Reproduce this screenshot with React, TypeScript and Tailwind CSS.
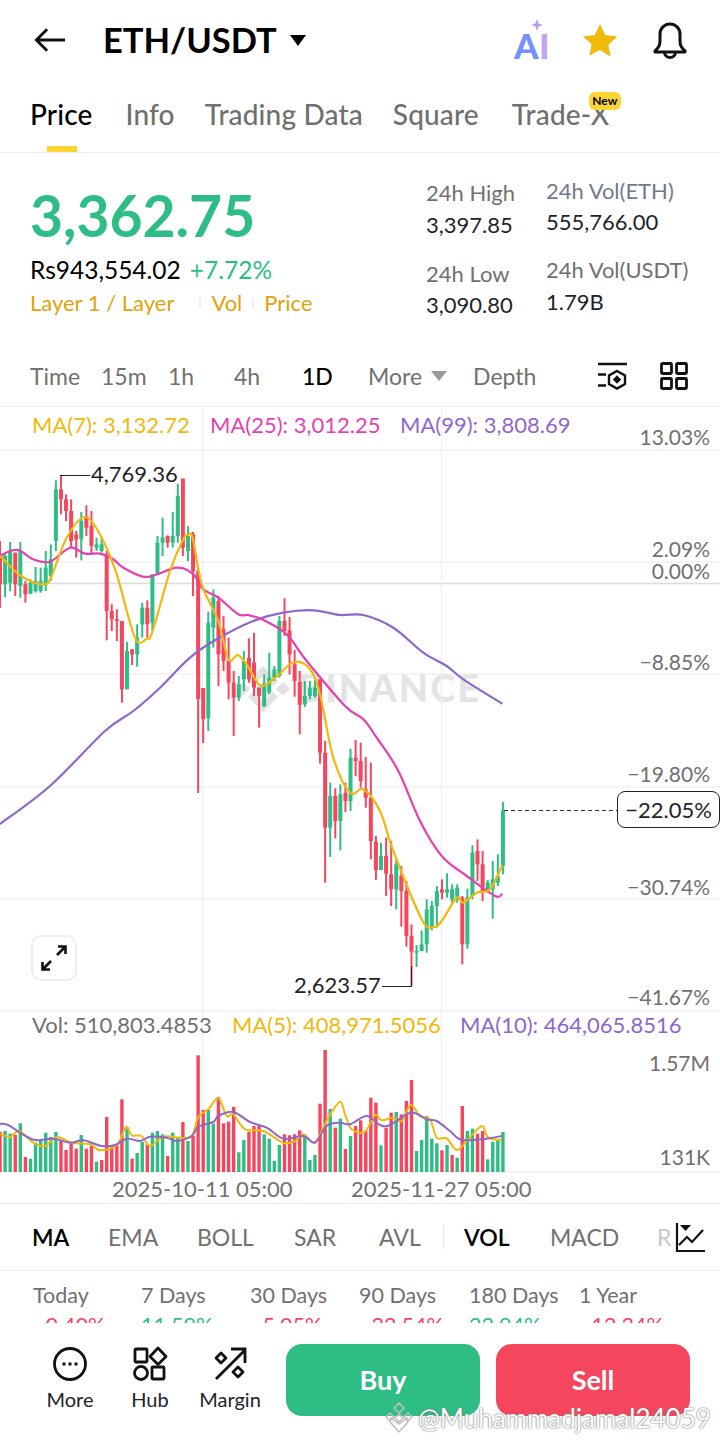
const RED = '#f6465d';
const GREEN = '#2ebd85';

type Candle = [number, number, number, number, 'r' | 'g'];

// high, low, body top, body bottom (left part measured on a 3x grid from y=440)
const CANDLES_LEFT: Candle[] = [
  [300, 500, 340, 430, 'r'], [340, 468, 345, 430, 'g'], [303, 450, 330, 425, 'g'], [335, 465, 335, 430, 'r'],
  [303, 470, 330, 435, 'g'], [420, 485, 430, 460, 'r'], [415, 458, 425, 458, 'g'], [378, 455, 420, 450, 'g'],
  [380, 455, 420, 450, 'g'], [330, 450, 380, 430, 'g'], [310, 420, 355, 405, 'g'], [118, 330, 145, 300, 'g'],
  [103, 220, 145, 175, 'r'], [160, 240, 175, 210, 'r'], [175, 320, 210, 300, 'r'], [270, 350, 280, 295, 'r'],
  [213, 358, 240, 295, 'g'], [193, 285, 225, 260, 'r'], [210, 340, 255, 315, 'r'], [290, 330, 310, 320, 'g'],
  [290, 335, 310, 330, 'g'], [330, 598, 340, 510, 'r'], [490, 570, 510, 535, 'r'], [505, 600, 535, 540, 'r'],
  [540, 785, 540, 745, 'r'], [603, 745, 630, 745, 'g'], [625, 672, 625, 640, 'r'], [550, 677, 590, 640, 'g'],
  [485, 590, 500, 550, 'g'], [478, 590, 500, 550, 'r'], [400, 570, 400, 545, 'g'], [285, 400, 305, 400, 'g'],
  [230, 345, 290, 305, 'g'], [283, 320, 285, 305, 'r'], [213, 320, 285, 305, 'g'], [128, 305, 165, 285, 'g'],
  [113, 345, 113, 320, 'r'], [255, 360, 285, 330, 'g'], [273, 465, 280, 390, 'r'], [375, 1056, 390, 774, 'r'],
  [741, 906, 741, 834, 'r'], [512, 870, 545, 831, 'g'], [445, 620, 470, 560, 'g'], [465, 735, 480, 640, 'r'],
  [525, 690, 565, 660, 'r'], [590, 775, 660, 725, 'r'], [690, 885, 725, 770, 'r'], [705, 780, 730, 770, 'g'],
  [630, 750, 660, 715, 'g'], [592, 725, 650, 715, 'r'],
];

// same, right part on a 3x grid from y=580
const CANDLES_RIGHT: Candle[] = [
  [155, 345, 245, 320, 'r'], [320, 440, 320, 345, 'r'], [280, 378, 310, 375, 'g'], [215, 340, 290, 335, 'g'],
  [255, 300, 265, 290, 'g'], [105, 290, 120, 285, 'g'], [52, 165, 120, 150, 'r'], [108, 280, 148, 220, 'r'],
  [207, 347, 250, 300, 'r'], [270, 460, 303, 372, 'r'], [300, 378, 345, 370, 'g'], [300, 355, 322, 345, 'g'],
  [298, 350, 320, 345, 'g'], [295, 548, 295, 515, 'r'], [480, 905, 515, 740, 'r'], [605, 828, 645, 740, 'g'],
  [622, 772, 645, 720, 'r'], [610, 808, 640, 720, 'g'], [605, 693, 635, 660, 'r'], [503, 690, 530, 660, 'g'],
  [477, 585, 530, 540, 'r'], [485, 620, 540, 600, 'r'], [528, 680, 625, 650, 'r'], [545, 835, 650, 780, 'r'],
  [765, 897, 782, 867, 'r'], [785, 867, 825, 867, 'g'], [770, 945, 825, 878, 'r'], [780, 975, 880, 925, 'r'],
  [835, 985, 850, 925, 'g'], [855, 1037, 885, 930, 'r'], [900, 1097, 930, 1065, 'r'], [1030, 1215, 1065, 1112, 'r'],
  [1092, 1158, 1110, 1115, 'g'], [1048, 1110, 1090, 1110, 'g'], [955, 1115, 985, 1090, 'g'], [960, 1048, 975, 1040, 'g'],
  [915, 1040, 930, 975, 'g'], [895, 955, 925, 935, 'r'], [877, 950, 925, 935, 'g'], [910, 970, 925, 955, 'g'],
  [910, 965, 920, 955, 'g'], [945, 1150, 950, 1090, 'r'], [923, 1103, 950, 1090, 'g'], [793, 955, 815, 945, 'g'],
  [775, 900, 810, 850, 'r'], [810, 960, 850, 930, 'r'], [897, 935, 905, 930, 'g'], [840, 1013, 895, 925, 'g'],
  [820, 915, 885, 905, 'g'], [663, 880, 688, 855, 'g'],
];

const VOLUMES: [number, 'r' | 'g'][] = [
  [362, 'r'], [360, 'g'], [368, 'g'], [372, 'r'], [337, 'g'], [438, 'r'], [443, 'g'], [395, 'g'], [390, 'g'], [365, 'g'],
  [378, 'g'], [363, 'g'], [390, 'r'], [417, 'r'], [397, 'r'], [413, 'r'], [372, 'g'], [413, 'r'], [405, 'r'], [452, 'g'],
  [447, 'r'], [318, 'r'], [405, 'r'], [400, 'r'], [265, 'r'], [352, 'g'], [443, 'r'], [426, 'g'], [393, 'g'], [400, 'r'],
  [365, 'g'], [360, 'g'], [370, 'g'], [435, 'r'], [365, 'g'], [378, 'g'], [333, 'r'], [390, 'g'], [375, 'r'], [133, 'r'],
  [297, 'r'], [297, 'g'], [338, 'g'], [258, 'r'], [337, 'r'], [332, 'r'], [288, 'r'], [424, 'g'], [387, 'g'], [363, 'r'],
  [345, 'r'], [345, 'r'], [370, 'g'], [383, 'g'], [450, 'g'], [402, 'g'], [370, 'r'], [373, 'r'], [370, 'r'], [358, 'r'],
  [375, 'g'], [447, 'g'], [432, 'g'], [278, 'r'], [117, 'r'], [294, 'g'], [350, 'r'], [323, 'g'], [414, 'r'], [375, 'g'],
  [345, 'r'], [328, 'r'], [360, 'r'], [260, 'r'], [275, 'r'], [403, 'g'], [350, 'r'], [305, 'r'], [303, 'g'], [310, 'r'],
  [270, 'r'], [207, 'r'], [420, 'g'], [387, 'g'], [315, 'g'], [383, 'g'], [397, 'g'], [418, 'r'], [402, 'g'], [432, 'r'],
  [440, 'g'], [285, 'r'], [360, 'g'], [353, 'g'], [368, 'r'], [360, 'r'], [445, 'g'], [392, 'g'], [388, 'g'], [363, 'g'],
];

const STEP = 5.08;

type Pt = [number, number];

function pts(list: Pt[], x0: number, y0: number): Pt[] {
  return list.map(([x, y]) => [x0 + x / 3, y0 + y / 3]);
}

// catmull-rom through the points, the real lines are smooth
function smooth(p: Pt[]) {
  let d = `M${p[0][0].toFixed(1)} ${p[0][1].toFixed(1)}`;
  for (let i = 0; i < p.length - 1; i++) {
    const a = p[Math.max(i - 1, 0)];
    const b = p[i];
    const c = p[i + 1];
    const e = p[Math.min(i + 2, p.length - 1)];
    const c1x = b[0] + (c[0] - a[0]) / 6;
    const c1y = b[1] + (c[1] - a[1]) / 6;
    const c2x = c[0] - (e[0] - b[0]) / 6;
    const c2y = c[1] - (e[1] - b[1]) / 6;
    d += `C${c1x.toFixed(1)} ${c1y.toFixed(1)} ${c2x.toFixed(1)} ${c2y.toFixed(1)} ${c[0].toFixed(1)} ${c[1].toFixed(1)}`;
  }
  return d;
}

const MA7 = smooth([
  ...pts([[-20, 330], [0, 345], [50, 395], [90, 420], [135, 430], [155, 405], [200, 290], [255, 228], [305, 290], [350, 400], [405, 590], [440, 593], [458, 570], [510, 390], [550, 295], [565, 282], [578, 290], [605, 430], [655, 540], [685, 655], [713, 642], [740, 670], [780, 733], [820, 715], [882, 663]], 0, 440),
  ...pts([[180, 265], [210, 340], [250, 530], [300, 635], [340, 625], [390, 690], [430, 810], [515, 1015], [550, 1038], [575, 1020], [620, 950], [640, 965], [680, 935], [720, 925], [757, 853]], 250, 580),
]);

const MA25 = smooth([
  ...pts([[0, 345], [30, 330], [58, 328], [100, 355], [150, 362], [210, 320], [255, 338], [300, 338], [340, 355], [370, 380], [440, 408], [530, 380], [580, 400], [610, 445], [655, 470], [715, 520], [745, 522], [790, 537], [860, 580], [920, 660]], 0, 440),
  ...pts([[285, 375], [340, 415], [380, 470], [445, 570], [510, 720], [575, 825], [650, 885], [735, 945], [757, 938]], 250, 580),
]);

const MA99 = smooth([
  [0, 823],
  [50, 785],
  ...pts([[315, 870], [400, 810], [480, 740], [570, 650], [650, 595], [760, 540]], 0, 440),
  ...pts([[100, 95], [190, 88], [270, 102], [340, 102], [430, 140], [520, 215], [590, 255], [640, 295], [757, 368]], 250, 580),
]);

const VOL_MA5 = smooth([
  ...pts([[0, 368], [30, 378], [58, 360], [100, 395], [135, 405], [170, 378], [215, 395], [270, 400], [300, 418], [350, 403], [378, 348], [395, 373], [425, 375], [450, 405], [490, 377], [540, 380], [575, 375], [595, 318], [625, 295], [655, 262], [680, 315], [700, 310], [735, 355], [790, 360], [850, 395], [885, 390], [910, 370], [945, 393], [985, 320]], 0, 1010),
  ...pts([[0, 272], [15, 310], [35, 355], [75, 362], [105, 312], [125, 328], [160, 320], [185, 330], [212, 282], [240, 315], [270, 325], [290, 380], [320, 382], [350, 417], [380, 390], [425, 345], [445, 380], [485, 387]], 340, 1010),
]);

const VOL_MA10 = smooth([
  ...pts([[0, 338], [25, 342], [60, 365], [105, 387], [160, 383], [210, 395], [250, 388], [305, 405], [345, 402], [380, 383], [420, 390], [450, 377], [500, 380], [530, 390], [575, 375], [595, 347], [640, 333], [655, 315], [700, 303], [750, 333], [800, 350], [850, 383], [910, 375], [945, 395], [980, 345]], 0, 1010),
  ...pts([[0, 335], [30, 340], [80, 315], [120, 342], [150, 342], [212, 305], [260, 325], [290, 330], [330, 360], [365, 387], [440, 383], [485, 375]], 340, 1010),
]);

function CandleMark({ c, i, y0 }: { c: Candle; i: number; y0: number }) {
  const x = i * STEP;
  const color = c[4] === 'r' ? RED : GREEN;
  const top = y0 + c[2] / 3;
  const bottom = y0 + c[3] / 3;
  return (
    <g>
      <line x1={x} x2={x} y1={y0 + c[0] / 3} y2={y0 + c[1] / 3} stroke={color} strokeWidth={2} />
      <rect x={x - 2} y={top} width={4} height={Math.max(bottom - top, 1)} fill={color} />
    </g>
  );
}

function ChartDrawing() {
  return (
    <svg className="absolute inset-0" width={720} height={797} viewBox="0 406 720 797" fill="none">
      {[449, 561, 673, 786, 898, 1010, 1171].map(y => (
        <line key={y} x1={0} x2={720} y1={y} y2={y} stroke="#f1f1f1" strokeWidth={1.5} />
      ))}
      <line x1={0} x2={720} y1={582.5} y2={582.5} stroke="#dcdcdc" strokeWidth={1.5} />
      <line x1={202.5} x2={202.5} y1={407} y2={1171} stroke="#eeeeee" />
      <line x1={441.5} x2={441.5} y1={407} y2={1171} stroke="#eeeeee" />

      {/* watermark logo */}
      <g fill="#e2e2e2">
        <path d="M263 665l15 15-5 5-10-10-10 10-5-5zM263 711l15-15-5-5-10 10-10-10-5 5z" />
        <rect x={258} y={683} width={10} height={10} transform="rotate(45 263 688)" />
        <rect x={238} y={683} width={10} height={10} transform="rotate(45 243 688)" />
        <rect x={278} y={683} width={10} height={10} transform="rotate(45 283 688)" />
      </g>

      {CANDLES_LEFT.map((c, i) => (
        <CandleMark key={i} c={c} i={i} y0={440} />
      ))}
      {CANDLES_RIGHT.map((c, i) => (
        <CandleMark key={i} c={c} i={i + 50} y0={580} />
      ))}

      <path d={MA99} stroke="#8e67cb" strokeWidth={2.2} />
      <path d={MA25} stroke="#e83fb0" strokeWidth={2.2} />
      <path d={MA7} stroke="#f0b90b" strokeWidth={2.2} />

      <path d="M60 474.5H90M382 985.5H411.500V965" stroke="#1e2329" strokeWidth={1} />
      <path d="M504 809.500H617" stroke="#333" strokeWidth={1} strokeDasharray="4 3" />

      {VOLUMES.map(([top, s], i) => (
        <rect
          key={i}
          x={i * STEP - 1.7}
          y={1010 + top / 3}
          width={3.4}
          height={161 - top / 3}
          fill={s === 'r' ? RED : GREEN}
        />
      ))}
      <path d={VOL_MA5} stroke="#f0b90b" strokeWidth={2} />
      <path d={VOL_MA10} stroke="#8e67cb" strokeWidth={2} />
    </svg>
  );
}

const AXIS = [
  { label: '13.03%', cls: 'top-[16px]' },
  { label: '2.09%', cls: 'top-[128px]' },
  { label: '0.00%', cls: 'top-[150px]' },
  { label: '−8.85%', cls: 'top-[241px]' },
  { label: '−19.80%', cls: 'top-[353px]' },
  { label: '−30.74%', cls: 'top-[466px]' },
  { label: '−41.67%', cls: 'top-[576px]' },
  { label: '1.57M', cls: 'top-[642px]' },
  { label: '131K', cls: 'top-[736px]' },
];

function Chart() {
  return (
    <div className="relative h-[797px] border-b border-[#eeeeee] overflow-hidden">
      <div className="absolute left-[298px] top-[253px] text-[38px] leading-[54px] font-black tracking-[2px] text-[#e4e4e4]">
        BINANCE
      </div>
      <ChartDrawing />

      <div className="absolute left-[32px] top-[4px] text-[22px] leading-[28px] text-[#f0b90b]">MA(7): 3,132.72</div>
      <div className="absolute left-[210px] top-[4px] text-[22px] leading-[28px] text-[#e83fb0]">MA(25): 3,012.25</div>
      <div className="absolute left-[400px] top-[4px] text-[22px] leading-[28px] text-[#8e67cb]">MA(99): 3,808.69</div>

      {AXIS.map(a => (
        <div key={a.label} className={`absolute right-[10px] text-[21px] leading-[28px] text-[#707070] ${a.cls}`}>
          {a.label}
        </div>
      ))}

      <div className="absolute left-[91px] top-[53px] text-[22px] leading-[28px] text-[#1e2329]">4,769.36</div>
      <div className="absolute left-[294px] top-[564px] text-[22px] leading-[28px] text-[#1e2329]">2,623.57</div>

      <div className="absolute left-[617px] top-[384px] w-[103px] h-[37px] flex items-center justify-center rounded-lg border border-[#1e2329] bg-white text-[22px] text-[#1e2329]">
        −22.05%
      </div>

      <div className="absolute left-[31px] top-[528px] w-[46px] h-[46px] flex items-center justify-center rounded-[10px] border-2 border-[#eeeeee] bg-white">
        <svg width="30" height="30" viewBox="0 0 30 30" fill="none" stroke="#111" strokeWidth="2.600">
          <path d="M18 12l8-8M19 3.500h7.500V11M12 18l-8 8M3.500 19v7.500H11" />
        </svg>
      </div>

      <div className="absolute left-[32px] top-[604px] text-[22px] leading-[28px] text-[#707070]">Vol: 510,803.4853</div>
      <div className="absolute left-[232px] top-[604px] text-[22px] leading-[28px] text-[#f0b90b]">MA(5): 408,971.5056</div>
      <div className="absolute left-[460px] top-[604px] text-[22px] leading-[28px] text-[#8e67cb]">MA(10): 464,065.8516</div>

      <div className="absolute left-[112px] top-[768px] text-[22px] leading-[28px] text-[#707070]">2025-10-11 05:00</div>
      <div className="absolute left-[351px] top-[768px] text-[22px] leading-[28px] text-[#707070]">2025-11-27 05:00</div>
    </div>
  );
}

function Header() {
  return (
    <div className="h-[80px] flex items-center pl-[34px] pr-[33px]">
      <svg width="32" height="26" viewBox="0 0 33 26" fill="none" stroke="#111" strokeWidth="3">
        <path d="M32 13H3M13.500 2L2.500 13l11 11" />
      </svg>
      <span className="ml-[37px] text-[34.500px] leading-[40px] font-bold text-black">ETH/USDT</span>
      <span className="ml-[13px] w-0 h-0 border-x-[8px] border-x-transparent border-t-[11px] border-t-black" />
      <div className="ml-auto flex items-center">
        <div className="relative w-[40px] h-[44px] mt-[2px]">
          <svg className="absolute left-[20px] top-0" width="14" height="14" viewBox="0 0 14 14">
            <path d="M6 0l1.600 4.400L12 6 7.600 7.600 6 12 4.400 7.600 0 6l4.400-1.600z" fill="#b79bf0" />
          </svg>
          <span className="absolute left-[3px] top-[6px] text-[35px] leading-[40px] font-black text-[#7590ff]">A</span>
          <span className="absolute left-[28px] top-[6px] text-[35px] leading-[40px] font-black text-[#c0a6f2]">I</span>
        </div>
        <svg className="ml-[31px]" width="36" height="34" viewBox="0 0 36 34">
          <path d="M18 1l5.200 11 12 1.600-8.800 8.300 2.300 11.900L18 27l-10.700 5.800 2.300-11.900L.8 13.600l12-1.600z" fill="#f0b90b" />
        </svg>
        <svg className="ml-[35px]" width="34" height="38" viewBox="0 0 34 38" fill="none" stroke="#111" strokeWidth="3">
          <path d="M2 30c3-3 5-5 5-10v-7a10 10 0 0 1 20 0v7c0 5 2 7 5 10a1 1 0 0 1 0 1H2z" strokeLinejoin="round" />
          <path d="M11.500 31a5.500 5.500 0 0 0 11 0" />
        </svg>
      </div>
    </div>
  );
}

function Tabs() {
  return (
    <div className="relative h-[73px] flex items-start gap-[30px] pl-[30px] pt-[17px] border-b border-[#eeeeee] text-[28px] leading-[34px] tracking-[0.15px] font-medium text-[#707070]">
      <span className="mr-[3px] text-black">Price</span>
      <span>Info</span>
      <span>Trading Data</span>
      <span className="mr-[3px]">Square</span>
      <span className="relative">
        Trade-X
        <span className="absolute left-[77px] -top-[5px] w-[32px] h-[18px] rounded-[6px] bg-[#fcd535] flex items-center justify-center text-[12px] leading-none font-bold tracking-normal text-black">
          New
        </span>
      </span>
      <span className="absolute left-[47px] bottom-0 w-[30px] h-[6px] bg-[#fcd535]" />
    </div>
  );
}

function Stats() {
  return (
    <div className="h-[197px] flex pl-[30px]">
      <div className="w-[396px] pt-[28px]">
        <div className="text-[57px] leading-[68px] font-bold text-[#2ebd85]">3,362.75</div>
        <div className="mt-[6px] flex items-center gap-[9px] text-[24.500px] leading-[30px]">
          <span className="text-black">Rs943,554.02</span>
          <span className="text-[#2ebd85]">+7.72%</span>
        </div>
        <div className="mt-[4px] flex items-center text-[22px] leading-[28px] text-[#e0a30b]">
          <span>Layer 1 / Layer</span>
          <span className="ml-[25px] w-[2px] h-[10px] bg-[#eeeeee]" />
          <span className="ml-[10px]">Vol</span>
          <span className="ml-[10px] w-[2px] h-[10px] bg-[#eeeeee]" />
          <span className="ml-[10px]">Price</span>
        </div>
      </div>
      <div className="w-[120px] pt-[26px] text-[22px] leading-[28px]">
        <div className="text-[#707070]">24h High</div>
        <div className="mt-[4px] text-[#1e2329]">3,397.85</div>
        <div className="mt-[21px] text-[#707070]">24h Low</div>
        <div className="mt-[3px] text-[#1e2329]">3,090.80</div>
      </div>
      <div className="pt-[24px] text-[22px] leading-[28px]">
        <div className="text-[#707a8a]">24h Vol(ETH)</div>
        <div className="mt-[3px] text-[#1e2329]">555,766.00</div>
        <div className="mt-[20px] text-[#707070]">24h Vol(USDT)</div>
        <div className="mt-[4px] text-[#1e2329]">1.79B</div>
      </div>
    </div>
  );
}

function TimeRow() {
  return (
    <div className="h-[56px] flex items-center pl-[30px] pb-[4px] text-[23px] leading-[30px] text-[#707070]">
      <span className="w-[71px]">Time</span>
      <span className="w-[67px]">15m</span>
      <span className="w-[66px]">1h</span>
      <span className="w-[68px]">4h</span>
      <span className="w-[66px] font-medium text-black">1D</span>
      <span>More</span>
      <span className="ml-[9px] w-0 h-0 border-x-[8px] border-x-transparent border-t-[10px] border-t-[#9a9a9a]" />
      <span className="ml-[26px]">Depth</span>
      <svg className="ml-[61px]" width="30" height="28" viewBox="0 0 30 28" fill="none" stroke="#111" strokeWidth="2.400">
        <path d="M1 2h29M1 12.500h8M1 23.500h8" />
        <path d="M20 9l8 4.500v8.500l-8 4.500-8-4.500v-8.500z" />
        <path d="M20 15l2.500 2.500L20 20l-2.500-2.500z" fill="#111" />
      </svg>
      <svg className="ml-[33px]" width="28" height="28" viewBox="0 0 28 28" fill="none" stroke="#111" strokeWidth="2.800">
        <rect x="1.500" y="1.500" width="10" height="10" rx="1" />
        <rect x="16.500" y="1.500" width="10" height="10" rx="1" />
        <rect x="1.500" y="16.500" width="10" height="10" rx="1" />
        <rect x="16.500" y="16.500" width="10" height="10" rx="1" />
      </svg>
    </div>
  );
}

function Indicators() {
  return (
    <div className="relative h-[67px] flex items-center pl-[32px] border-b border-[#eeeeee] text-[23px] leading-[30px] text-[#707070] overflow-hidden">
      <span className="w-[76px] font-semibold text-black">MA</span>
      <span className="w-[89px]">EMA</span>
      <span className="w-[97px]">BOLL</span>
      <span className="w-[85px]">SAR</span>
      <span className="w-[64px]">AVL</span>
      <span className="w-px h-[24px] bg-[#e6e6e6]" />
      <span className="ml-[20px] w-[86px] font-semibold text-black">VOL</span>
      <span className="w-[107px]">MACD</span>
      <span className="text-[#c8c8c8]">R</span>
      <svg className="absolute left-[675px] top-[19px]" width="30" height="30" viewBox="0 0 30 30" fill="none" stroke="#111" strokeWidth="2.200">
        <path d="M2 0v28h28" />
        <path d="M4 22l8-8 5 5 11-12" />
        <path d="M5 2h11l-5.500 6z" fill="#111" stroke="none" />
      </svg>
    </div>
  );
}

const RETURNS = [
  { label: 'Today', value: '−0.40%', cls: 'text-[#f6465d]' },
  { label: '7 Days', value: '11.59%', cls: 'text-[#2ebd85]' },
  { label: '30 Days', value: '−5.05%', cls: 'text-[#f6465d]' },
  { label: '90 Days', value: '−22.54%', cls: 'text-[#f6465d]' },
  { label: '180 Days', value: '22.94%', cls: 'text-[#2ebd85]' },
  { label: '1 Year', value: '−12.34%', cls: 'text-[#f6465d]' },
];

function Returns() {
  return (
    <div className="h-[52px] overflow-hidden grid grid-cols-[108px_109px_109px_110px_110px_1fr] pl-[33px] pt-[10px] text-[21.500px] leading-[28px]">
      {RETURNS.map(r => (
        <div key={r.label}>
          <div className="text-[#707070]">{r.label}</div>
          <div className={`mt-[2px] ${r.cls}`}>{r.value}</div>
        </div>
      ))}
    </div>
  );
}

function BottomBar() {
  return (
    <div className="relative h-[121px] flex pt-[21px] pl-[30px]">
      <div className="w-[80px] flex flex-col items-center">
        <svg className="mt-[2px]" width="36" height="36" viewBox="0 0 36 36" fill="none" stroke="#111" strokeWidth="2.800">
          <circle cx="18" cy="18" r="15.500" />
          <path d="M10.500 18h3M16.500 18h3M22.500 18h3" strokeWidth="3" />
        </svg>
        <span className="mt-[3px] text-[20px] leading-[28px] text-[#1e2329]">More</span>
      </div>
      <div className="w-[80px] flex flex-col items-center">
        <svg className="mt-[2px]" width="36" height="36" viewBox="0 0 36 36" fill="none" stroke="#111" strokeWidth="2.800">
          <rect x="3" y="3" width="12" height="13" rx="1" />
          <path d="M26 2l8 8.500-8 8-8-8z" strokeLinejoin="round" />
          <circle cx="9" cy="27" r="6.500" />
          <rect x="20" y="21" width="12" height="12" rx="1" />
        </svg>
        <span className="mt-[3px] text-[20px] leading-[28px] text-[#1e2329]">Hub</span>
      </div>
      <div className="w-[80px] flex flex-col items-center">
        <svg className="mt-[2px]" width="36" height="36" viewBox="0 0 36 36" fill="none" stroke="#111" strokeWidth="2.800">
          <path d="M4 33L33 4M19 3h14v14" />
          <path d="M9 7l5 5-5 5-5-5zM26 21l5 5-5 5-5-5z" strokeLinejoin="round" />
        </svg>
        <span className="mt-[3px] text-[20px] leading-[28px] text-[#1e2329]">Margin</span>
      </div>
      <div className="ml-[16px] w-[194px] h-[72px] rounded-[16px] bg-[#2ebd85] flex items-center justify-center text-[27px] font-bold text-white">
        Buy
      </div>
      <div className="ml-[16px] w-[194px] h-[72px] rounded-[16px] bg-[#f6465d] flex items-center justify-center text-[27px] font-bold text-white">
        Sell
      </div>

      <div className="absolute left-[385px] top-[79px] flex items-center">
        <svg width="28" height="32" viewBox="0 0 28 32" fill="none" stroke="#bdbdbd" strokeWidth="1.500">
          <path d="M14 1l5 5-5 5-5-5zM5 11l4 4-4 4-4-4zM23 11l4 4-4 4-4-4zM14 12l4 4-4 4-4-4zM14 22l8-6 1 4-9 10-9-10 1-4z" />
        </svg>
        <span className="ml-[5px] text-[26px] leading-[30px] text-white [text-shadow:0_0_1px_#777,0_0_2px_#777]">@Muhammadjamal24059</span>
      </div>
    </div>
  );
}

export default function App() {
  return (
    <div className="w-[720px] h-[1444px] overflow-hidden bg-white font-['Lato','Liberation_Sans',sans-serif]">
      <Header />
      <Tabs />
      <Stats />
      <TimeRow />
      <div className="border-t border-[#eeeeee]">
        <Chart />
      </div>
      <Indicators />
      <Returns />
      <BottomBar />
    </div>
  );
}
